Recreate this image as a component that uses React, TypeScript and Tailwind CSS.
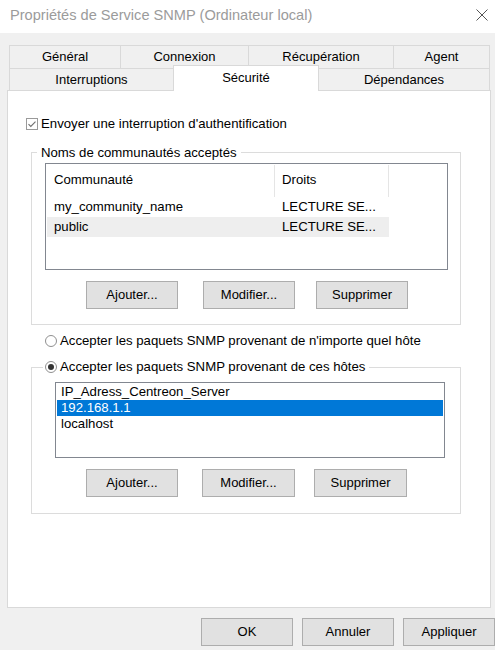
import React from "react";

const font = { fontFamily: '"Liberation Sans", Arial, sans-serif' };

function Btn({ label, className = "" }: { label: string; className?: string }) {
    return (
        <div className={`h-[28px] w-[92px] flex items-center justify-center bg-[#e1e1e1] border border-[#adadad] text-[13px] text-black ${className}`}>
            {label}
        </div>
    );
}

function Check() {
    return (
        <svg width="12" height="12" viewBox="0 0 12 12" className="shrink-0">
            <rect x="0.5" y="0.5" width="11" height="11" fill="white" stroke="#9a9a9a" />
            <path d="M2.5 6.2 L4.8 8.5 L9.5 3.6" fill="none" stroke="#6f6f6f" strokeWidth="1.1" />
        </svg>
    );
}

function Radio({ on = false }: { on?: boolean }) {
    return (
        <svg width="12" height="12" viewBox="0 0 12 12" className="shrink-0">
            <circle cx="6" cy="6" r="5.5" fill="white" stroke="#8f8f8f" />
            {on && <circle cx="6" cy="6" r="3" fill="#333" />}
        </svg>
    );
}

export default function App() {
    const row1 = [
        { t: "Général", w: "w-[111px]" },
        { t: "Connexion", w: "w-[128px]" },
        { t: "Récupération", w: "w-[145px]" },
        { t: "Agent", w: "w-[97px]" },
    ];

    return (
        <div className="w-[495px] h-[650px] bg-[#f0f0f0] text-black overflow-hidden" style={font}>
            {/* title bar */}
            <div className="h-[33px] bg-white flex items-center justify-between pl-[10px] pr-[7px]">
                <span className="text-[14.6px] text-[#9b9b9b] -mt-[2px]">Propriétés de Service SNMP (Ordinateur local)</span>
                <svg width="12" height="12" viewBox="0 0 12 12" className="-mt-[3px]">
                    <path d="M0.5 0.5 L11.5 11.5 M11.5 0.5 L0.5 11.5" stroke="#555" strokeWidth="1" />
                </svg>
            </div>

            {/* tabs */}
            <div className="mt-[12px] ml-[9px] w-[481px] text-[13px]">
                <div className="flex h-[23px]">
                    {row1.map((r, i) => (
                        <div key={r.t} className={`${r.w} flex items-center justify-center border-t border-l border-[#d9d9d9] ${i === row1.length - 1 ? "border-r" : ""}`}>
                            {r.t}
                        </div>
                    ))}
                </div>
                <div className="flex h-[22px]">
                    <div className="w-[164px] flex items-center justify-center border-t border-l border-[#d9d9d9]">Interruptions</div>
                    <div className="w-[146px] h-[26px] -mt-[3px] relative z-10 bg-white flex items-center justify-center border-t border-l border-r border-[#d9d9d9] pb-[2px]">Sécurité</div>
                    <div className="w-[171px] flex items-center justify-center border-t border-r border-[#d9d9d9]">Dépendances</div>
                </div>
            </div>

            {/* panel */}
            <div className="ml-[7px] w-[484px] h-[518px] bg-white border border-[#d9d9d9] text-[13.2px]">
                <div className="flex items-center h-[16px] mt-[25px] ml-[18px] gap-[3px]">
                    <Check />
                    <span>Envoyer une interruption d'authentification</span>
                </div>

                <fieldset className="mt-[13px] ml-[23px] w-[430px] border border-[#dcdcdc] pb-[15px]">
                    <legend className="ml-[5px] px-[4px] leading-[15px]">Noms de communautés acceptés</legend>
                    <div className="mt-[3px] ml-[13px] w-[403px] h-[107px] border border-[#828790] p-px">
                        <div className="flex h-[32px]">
                            <div className="w-[228px] border-r border-[#e5e5e5] flex items-center pl-[7px] pb-[2px]">Communauté</div>
                            <div className="w-[114px] border-r border-[#e5e5e5] flex items-center pl-[7px] pb-[2px]">Droits</div>
                        </div>
                        <div className="flex h-[20px] items-center w-[342px]">
                            <div className="w-[228px] pl-[7px]">my_community_name</div>
                            <div className="pl-[7px]">LECTURE SE...</div>
                        </div>
                        <div className="flex h-[20px] items-center w-[342px] bg-[#eeeeee]">
                            <div className="w-[228px] pl-[7px]">public</div>
                            <div className="pl-[7px]">LECTURE SE...</div>
                        </div>
                    </div>
                    <div className="flex mt-[11px]">
                        <Btn label="Ajouter..." className="ml-[54px]" />
                        <Btn label="Modifier..." className="ml-[25px]" />
                        <Btn label="Supprimer" className="ml-[21px]" />
                    </div>
                </fieldset>

                <div className="flex items-center h-[16px] mt-[8px] ml-[37px] gap-[3px]">
                    <Radio />
                    <span>Accepter les paquets SNMP provenant de n'importe quel hôte</span>
                </div>

                <fieldset className="mt-[10px] ml-[23px] w-[430px] border border-[#dcdcdc] pb-[16px]">
                    <legend className="ml-[11px] pl-[2px] pr-[4px] leading-[16px]">
                        <span className="flex items-center gap-[3px]">
                            <Radio on />
                            <span>Accepter les paquets SNMP provenant de ces hôtes</span>
                        </span>
                    </legend>
                    <div className="mt-[7px] ml-[23px] w-[390px] h-[76px] border border-[#828790] p-px leading-[16px]">
                        <div className="h-[16px] pl-[4px]">IP_Adress_Centreon_Server</div>
                        <div className="h-[16px] pl-[4px] bg-[#0078d7] text-white">192.168.1.1</div>
                        <div className="h-[16px] pl-[4px]">localhost</div>
                    </div>
                    <div className="flex mt-[11px]">
                        <Btn label="Ajouter..." className="ml-[54px]" />
                        <Btn label="Modifier..." className="ml-[24px] w-[93px]" />
                        <Btn label="Supprimer" className="ml-[19px] w-[93px]" />
                    </div>
                </fieldset>
            </div>

            {/* bottom buttons */}
            <div className="flex mt-[10px] ml-[201px]">
                <Btn label="OK" />
                <Btn label="Annuler" className="ml-[9px]" />
                <Btn label="Appliquer" className="ml-[9px] w-[86px]" />
            </div>
        </div>
    );
}
